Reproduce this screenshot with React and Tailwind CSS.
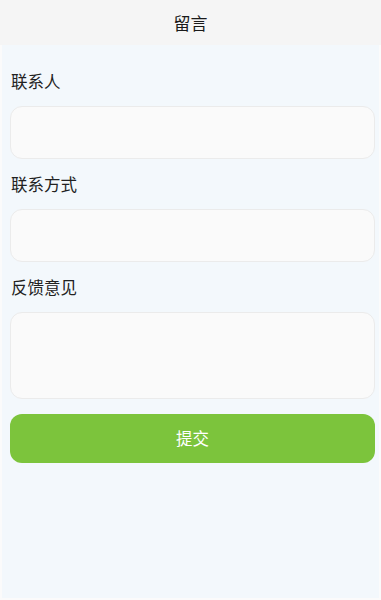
export default function App() {
  const font = { fontFamily: '"Noto Sans CJK SC", "Noto Sans", sans-serif' };
  return (
    <div
      className="min-h-[600px] bg-[#f3f8fc] border-x-2 border-b-2 border-[#fbfbfb] flex flex-col"
      style={font}
    >
      <header className="h-[45px] bg-[#f5f5f5] flex items-center justify-center -mx-[2px]">
        <h1 className="text-[17px] text-[#1a1a1a]">留言</h1>
      </header>

      <main className="pl-[8px] pr-[4px] pt-[22px]">
        <label className="block text-[16.5px] text-[#222] leading-[28px] ml-[1px]">联系人</label>
        <input className="mt-[11px] block w-full h-[53px] rounded-[12px] bg-[#fafafa] border border-[#ebebeb] outline-none px-3" />

        <label className="block text-[16.5px] text-[#222] leading-[28px] mt-[11px] ml-[1px]">联系方式</label>
        <input className="mt-[11px] block w-full h-[53px] rounded-[12px] bg-[#fafafa] border border-[#ebebeb] outline-none px-3" />

        <label className="block text-[16.5px] text-[#222] leading-[28px] mt-[11px] ml-[1px]">反馈意见</label>
        <textarea className="mt-[11px] block w-full h-[87px] rounded-[12px] bg-[#fafafa] border border-[#ebebeb] outline-none px-3 py-2 resize-none" />

        <button className="mt-[15px] block w-full h-[49px] rounded-[12px] bg-[#7cc43c] text-white text-[16.5px]">
          提交
        </button>
      </main>
    </div>
  );
}
